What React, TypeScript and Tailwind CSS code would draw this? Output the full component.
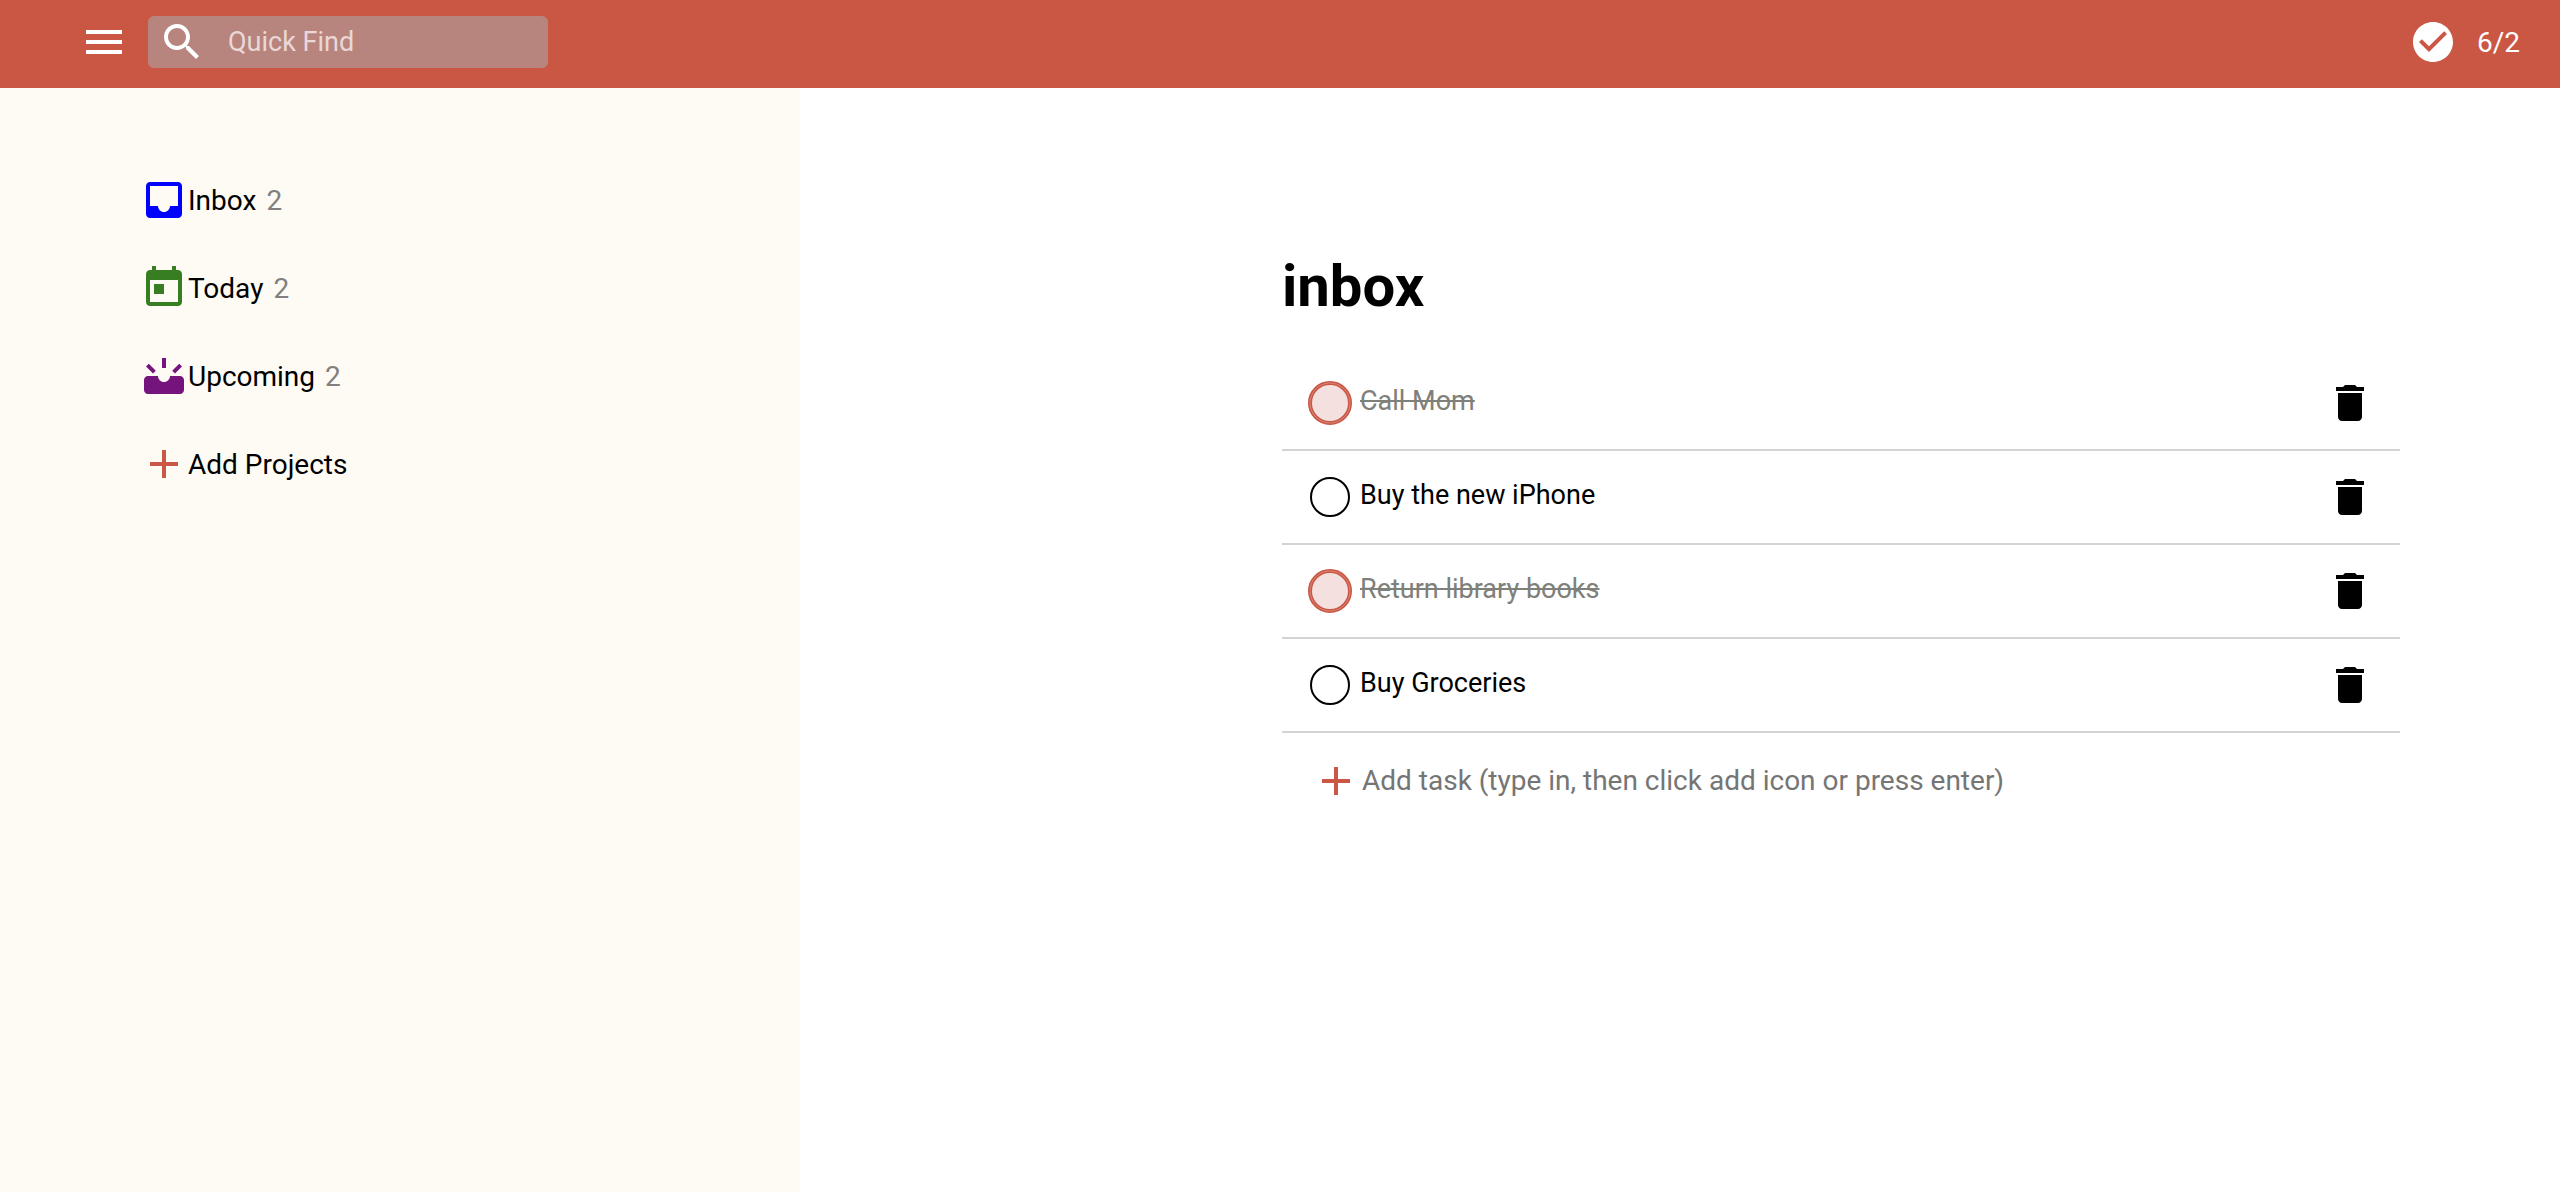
import { useState, type ReactNode } from "react";

type IconProps = { className?: string; children: ReactNode };

function Icon({ className = "", children }: IconProps) {
  return (
    <svg viewBox="0 0 24 24" fill="currentColor" aria-hidden="true" className={`size-12 shrink-0 ${className}`}>
      {children}
    </svg>
  );
}

const paths = {
  menu: "M3 18h18v-2H3v2zm0-5h18v-2H3v2zm0-7v2h18V6H3z",
  search:
    "M15.5 14h-.79l-.28-.27C15.41 12.59 16 11.11 16 9.5 16 5.91 13.09 3 9.5 3S3 5.91 3 9.5 5.91 16 9.5 16c1.61 0 3.09-.59 4.23-1.57l.27.28v.79l5 4.99L20.49 19l-4.99-5zm-6 0C7.01 14 5 11.99 5 9.5S7.01 5 9.5 5 14 7.01 14 9.5 11.99 14 9.5 14z",
  check:
    "M12 2C6.48 2 2 6.48 2 12s4.48 10 10 10 10-4.48 10-10S17.52 2 12 2zm-2 15l-5-5 1.41-1.41L10 14.17l7.59-7.59L19 8l-9 9z",
  inbox:
    "M19 3H4.99c-1.11 0-1.98.89-1.98 2L3 19c0 1.1.88 2 1.99 2H19c1.1 0 2-.9 2-2V5c0-1.11-.9-2-2-2zm0 12h-4c0 1.66-1.35 3-3 3s-3-1.34-3-3H4.99V5H19v10z",
  today:
    "M19 3h-1V1h-2v2H8V1H6v2H5c-1.11 0-1.99.9-1.99 2L3 19c0 1.1.89 2 2 2h14c1.1 0 2-.9 2-2V5c0-1.1-.9-2-2-2zm0 16H5V8h14v11zM7 10h5v5H7z",
  upcoming:
    "M20 12h-5c0 1.66-1.34 3-3 3s-3-1.34-3-3H4c-1.1 0-2 .9-2 2v5c0 1.1.9 2 2 2h16c1.1 0 2-.9 2-2v-5c0-1.1-.9-2-2-2zM11 3h2v5h-2zM4.4 5.9l3.5 3.5-1.4 1.4L3 7.3zM19.6 5.9L21 7.3l-3.5 3.5-1.4-1.4z",
  add: "M19 13h-6v6h-2v-6H5v-2h6V5h2v6h6v2z",
  trash: "M6 19c0 1.1.9 2 2 2h8c1.1 0 2-.9 2-2V7H6v12zM19 4h-3.5l-1-1h-5l-1 1H5v2h14V4z",
};

const folders = [
  { name: "Inbox", count: 2, path: paths.inbox, color: "text-[#0000ff]" },
  { name: "Today", count: 2, path: paths.today, color: "text-[#377e22]" },
  { name: "Upcoming", count: 2, path: paths.upcoming, color: "text-[#75147c]" },
];

const initialTasks = [
  { title: "Call Mom", done: true },
  { title: "Buy the new iPhone", done: false },
  { title: "Return library books", done: true },
  { title: "Buy Groceries", done: false },
];

export default function App() {
  const [tasks, setTasks] = useState(initialTasks);
  const [draft, setDraft] = useState("");

  const addTask = () => {
    if (!draft.trim()) return;
    setTasks([...tasks, { title: draft.trim(), done: false }]);
    setDraft("");
  };

  return (
    <div className="flex min-h-screen flex-col bg-white font-[Roboto,sans-serif] text-[28px] leading-8 text-black">
      <header className="flex items-start justify-between bg-[#ca5644] pt-4 pr-10 pb-5 pl-20 text-white">
        <div className="flex items-center gap-5">
          <button type="button" aria-label="Toggle menu">
            <Icon>
              <path d={paths.menu} />
            </Icon>
          </button>
          <label className="flex h-13 w-100 items-center gap-5.5 rounded-md bg-[#b7847e] pl-2.5">
            <Icon>
              <path d={paths.search} />
            </Icon>
            <input
              type="search"
              aria-label="Quick Find"
              placeholder="Quick Find"
              className="min-w-0 flex-1 bg-transparent text-[27px] outline-none placeholder:text-[#ead8d6]"
            />
          </label>
        </div>
        <div className="flex h-13 items-center gap-5">
          <Icon>
            <path d={paths.check} />
          </Icon>
          <span className="pt-0.5">6/2</span>
        </div>
      </header>

      <div className="flex flex-1">
        <nav aria-label="Projects" className="w-200 shrink-0 bg-[#fefbf4] pt-22 pl-35">
          <ul className="flex flex-col gap-10">
            {folders.map((folder) => (
              <li key={folder.name}>
                <a href={`#${folder.name.toLowerCase()}`} className="flex items-center">
                  <Icon className={folder.color}>
                    <path d={folder.path} />
                  </Icon>
                  <span className="pt-0.5">{folder.name}</span>
                  <span className="ml-2.5 pt-0.5 text-[#808080]">{folder.count}</span>
                </a>
              </li>
            ))}
            <li>
              <button type="button" className="flex items-center">
                <Icon className="text-[#ca5644]">
                  <path d={paths.add} />
                </Icon>
                <span className="pt-0.5">Add Projects</span>
              </button>
            </li>
          </ul>
        </nav>

        <main className="flex-1 pt-[166px] pr-40 pl-[482px]">
          <h1 className="text-[58px] leading-16 font-bold">inbox</h1>
          <ul className="mt-[39px]">
            {tasks.map((task, index) => (
              <li key={task.title} className="flex h-[94px] items-center border-b-2 border-[#d3d3d3] pr-6.5 pl-6">
                <label className="flex flex-1 items-center gap-1.5">
                  <input
                    type="checkbox"
                    checked={task.done}
                    onChange={() =>
                      setTasks(tasks.map((item, i) => (i === index ? { ...item, done: !item.done } : item)))
                    }
                    className="peer sr-only"
                  />
                  <Icon className={task.done ? "text-[#ca5644]" : "text-black"}>
                    {task.done ? (
                      <>
                        <circle cx="12" cy="12" r="10" fill="#f5e0e0" stroke="currentColor" strokeWidth="2" />
                        <circle cx="12" cy="12" r="10" fill="none" stroke="#dd9287" strokeWidth="0.4" />
                      </>
                    ) : (
                      <circle cx="12" cy="12" r="9.5" fill="none" stroke="currentColor" strokeWidth="1" />
                    )}
                  </Icon>
                  <span className={task.done ? "pb-1 text-[27px] text-[#80807a] line-through" : "pb-1 text-[27px]"}>
                    {task.title}
                  </span>
                </label>
                <button
                  type="button"
                  aria-label={`Delete ${task.title}`}
                  onClick={() => setTasks(tasks.filter((_, i) => i !== index))}
                >
                  <Icon>
                    <path d={paths.trash} />
                  </Icon>
                </button>
              </li>
            ))}
          </ul>
          <form
            className="mt-6 flex items-center pl-7.5"
            onSubmit={(event) => {
              event.preventDefault();
              addTask();
            }}
          >
            <button type="submit" aria-label="Add task" className="text-[#ca5644]">
              <Icon>
                <path d={paths.add} />
              </Icon>
            </button>
            <input
              type="text"
              aria-label="New task"
              value={draft}
              onChange={(event) => setDraft(event.target.value)}
              placeholder="Add task (type in, then click add icon or press enter)"
              className="ml-0.5 min-w-0 flex-1 bg-transparent outline-none placeholder:text-[#757575]"
            />
          </form>
        </main>
      </div>
    </div>
  );
}
